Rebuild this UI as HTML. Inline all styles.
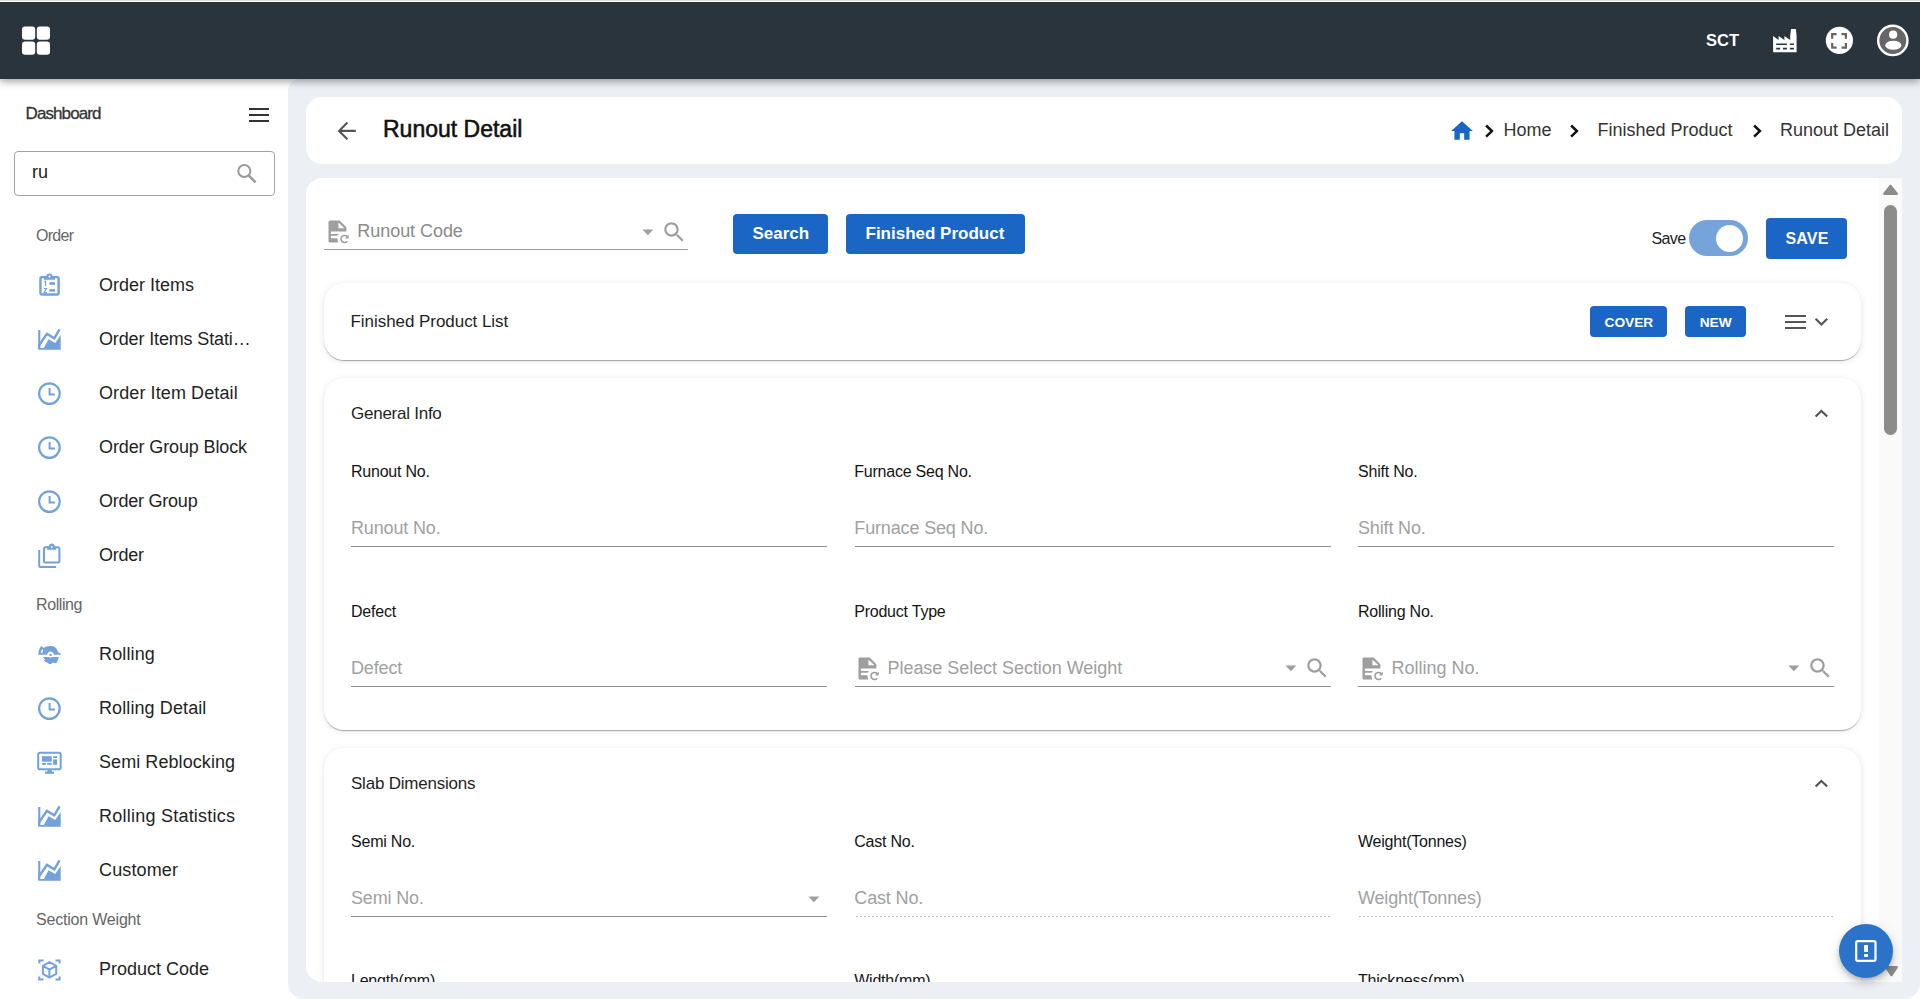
<!DOCTYPE html>
<html><head><meta charset="utf-8">
<style>
*{box-sizing:border-box;margin:0;padding:0}
html,body{width:1920px;height:999px;overflow:hidden;background:#fff;font-family:"Liberation Sans",sans-serif;color:#1c1c1c}
.a{position:absolute;white-space:nowrap}
.ico{position:absolute;overflow:visible}
.card{position:absolute;background:#fff}
#hdr{position:absolute;left:0;top:2px;width:1920px;height:77px;background:#29343c;z-index:5;box-shadow:0 2px 8px rgba(0,0,0,.42)}
#main{position:absolute;left:288px;top:79px;width:1632px;height:920px;background:#ecf0f5;border-radius:12px 0 16px 16px}
</style></head><body>
<div class="a" style="left:0;top:0;width:1920px;height:1px;background:#dedfdd;z-index:7"></div><div class="a" style="left:0;top:1px;width:1920px;height:1px;background:#fff;z-index:7"></div><div id="hdr"><svg class="ico" style="left:21px;top:22.5px" width="30" height="30" viewBox="0 0 30 30"><g fill="#fff"><rect x="1" y="1.5" width="13.2" height="13.2" rx="3"/><rect x="15.8" y="1.5" width="13.2" height="13.2" rx="3"/><rect x="1" y="16.5" width="13.2" height="13.2" rx="3"/><rect x="15.8" y="16.5" width="13.2" height="13.2" rx="3"/></g></svg></div><div class="a" style="left:1706px;top:32.03px;font-size:16.5px;line-height:16.5px;color:#fff;font-weight:bold;z-index:6;">SCT</div>
<svg class="ico" style="left:1770px;top:26px;z-index:6" width="30" height="30" viewBox="0 0 30 30"><path fill="#fff" fill-rule="evenodd" d="M3.1 26.2 V9.9 L8.6 14 V9.9 L14.4 14 V9.9 L20.2 14 V9.2 L21.1 2.9 H25.9 L26.6 9.9 V26.2 Z M6.2 17.4 h10.7 v1.6 h-10.7z M19.9 17.4 h4 v1.6 h-4z M6.2 21.8 h3.9 v1.7 h-3.9z M13 21.8 h3.9 v1.7 h-3.9z M19.9 21.8 h4 v1.7 h-4z"/></svg><svg class="ico" style="left:1824px;top:25px;z-index:6" width="32" height="32" viewBox="0 0 32 32"><circle cx="15.4" cy="15.45" r="13.6" fill="#fff"/><path d="M8.2 13.8 V9.2 H12.6 M17.5 9.2 H21.9 V13.8 M21.9 18 V22.6 H17.5 M12.6 22.6 H8.2 V18" fill="none" stroke="#666" stroke-width="2.2"/></svg><svg class="ico" style="left:1876px;top:24px;z-index:6" width="34" height="34" viewBox="0 0 34 34"><circle cx="16.8" cy="16.45" r="14.65" fill="#666" stroke="#fff" stroke-width="2.4"/><circle cx="17.1" cy="10.7" r="4.1" fill="#fff"/><ellipse cx="17.3" cy="21.25" rx="8.05" ry="4.45" fill="#fff"/></svg><div class="a" style="left:25.5px;top:104.61px;font-size:17px;line-height:17px;color:#333;-webkit-text-stroke:0.3px #333;letter-spacing:-0.9px;">Dashboard</div>
<div class="a" style="left:248.5px;top:108px;width:20.5px;height:2.2px;background:#333"></div><div class="a" style="left:248.5px;top:114px;width:20.5px;height:2.2px;background:#333"></div><div class="a" style="left:248.5px;top:119.7px;width:20.5px;height:2.2px;background:#333"></div><div class="a" style="left:14px;top:151px;width:261px;height:45px;border:1px solid #a3a3a3;border-radius:4px"></div><div class="a" style="left:32px;top:163.26px;font-size:18px;line-height:18px;color:#222;">ru</div>
<svg class="ico" style="left:232px;top:160px" width="28" height="28" viewBox="0 0 28 28"><circle cx="12.3" cy="11" r="6" fill="none" stroke="#999" stroke-width="2"/><path d="M16.6 15.4 L23.6 22.4" stroke="#999" stroke-width="2.4"/></svg><div class="a" style="left:36px;top:227.86px;font-size:16px;line-height:16px;color:#666;letter-spacing:-0.7px;">Order</div>
<svg class="ico" style="left:34px;top:269.0px" width="32" height="30" viewBox="0 0 32 30"><rect x="6.45" y="8.1" width="18.15" height="17.4" rx="1.2" fill="none" stroke="#72a2d9" stroke-width="2.4"/><path fill="#72a2d9" d="M9.9 6.9 H12.2 A3.3 3.3 0 0 1 18.6 6.9 H21 V10.7 H9.9 Z"/><circle cx="15.4" cy="7.6" r="1.1" fill="#fff"/><rect x="15.5" y="13.2" width="5.5" height="2.6" fill="#72a2d9"/><rect x="15.5" y="20.1" width="5.5" height="2.6" fill="#72a2d9"/><path d="M10.3 13 L11.6 12.2 V17" fill="none" stroke="#72a2d9" stroke-width="1.1"/><path d="M10 19.6 H12.6 L10 23.6 H12.8" fill="none" stroke="#72a2d9" stroke-width="1.1"/></svg><div class="a" style="left:99px;top:276.16px;font-size:18px;line-height:18px;color:#1f1f1f;letter-spacing:0.0px;">Order Items</div>
<svg class="ico" style="left:34px;top:324.1px" width="32" height="30" viewBox="0 0 32 30"><defs><clipPath id="chc1"><rect x="4.2" y="0" width="24" height="24.5"/></clipPath></defs><path fill="#72a2d9" d="M4.2 5.9 h2.1 v18.1 h20.4 v1.8 H4.2 z M9.8 24 L14.6 15.2 L21.3 18.9 L26.7 11.1 V24 Z"/><polyline clip-path="url(#chc1)" points="2.6,25 12.9,9.9 20.4,14.4 25.5,5.4" fill="none" stroke="#72a2d9" stroke-width="2.4"/></svg><div class="a" style="left:99px;top:330.16px;font-size:18px;line-height:18px;color:#1f1f1f;letter-spacing:-0.1411764705882353px;">Order Items Stati…</div>
<svg class="ico" style="left:34px;top:378.0px" width="32" height="30" viewBox="0 0 32 30"><circle cx="15.4" cy="15.6" r="10.3" fill="none" stroke="#72a2d9" stroke-width="2.2"/><path d="M15.6 10 V16.6 H21" fill="none" stroke="#72a2d9" stroke-width="2"/></svg><div class="a" style="left:99px;top:384.16px;font-size:18px;line-height:18px;color:#1f1f1f;letter-spacing:0.1px;">Order Item Detail</div>
<svg class="ico" style="left:34px;top:432.0px" width="32" height="30" viewBox="0 0 32 30"><circle cx="15.4" cy="15.6" r="10.3" fill="none" stroke="#72a2d9" stroke-width="2.2"/><path d="M15.6 10 V16.6 H21" fill="none" stroke="#72a2d9" stroke-width="2"/></svg><div class="a" style="left:99px;top:438.16px;font-size:18px;line-height:18px;color:#1f1f1f;letter-spacing:-0.125px;">Order Group Block</div>
<svg class="ico" style="left:34px;top:485.8px" width="32" height="30" viewBox="0 0 32 30"><circle cx="15.4" cy="15.6" r="10.3" fill="none" stroke="#72a2d9" stroke-width="2.2"/><path d="M15.6 10 V16.6 H21" fill="none" stroke="#72a2d9" stroke-width="2"/></svg><div class="a" style="left:99px;top:491.96px;font-size:18px;line-height:18px;color:#1f1f1f;letter-spacing:-0.24px;">Order Group</div>
<svg class="ico" style="left:34px;top:539.3px" width="32" height="30" viewBox="0 0 32 30"><rect x="10" y="8.2" width="15.4" height="15.4" rx="1.5" fill="none" stroke="#72a2d9" stroke-width="2"/><path fill="#72a2d9" d="M13.1 7.3 H14.9 A2.9 2.9 0 0 1 20.7 7.3 H22.1 V10.7 H13.1 Z"/><circle cx="17.8" cy="8" r="1.05" fill="#fff"/><path d="M5.2 11 V27 A1 1 0 0 0 6.2 28 H22" fill="none" stroke="#72a2d9" stroke-width="2"/></svg><div class="a" style="left:99px;top:545.96px;font-size:18px;line-height:18px;color:#1f1f1f;letter-spacing:-0.25px;">Order</div>
<div class="a" style="left:36px;top:597.36px;font-size:16px;line-height:16px;color:#666;letter-spacing:-0.4px;">Rolling</div>
<svg class="ico" style="left:34px;top:638.0px" width="32" height="30" viewBox="0 0 32 30"><path fill="#72a2d9" fill-rule="evenodd" d="M4.2 16.8 C4.5 13 5.5 10 7.2 8 L9.8 10 C11 8.8 13.5 8 16.5 8 C20.5 8 23.3 10.5 24 14.2 L26.7 15.6 V16.8 H20 C19.5 14.5 18 13.4 16.5 13.4 C15 13.4 13.5 14.5 13 16.8 Z M6.6 14.8 L8 11 L9.2 12 L8.5 14.8 Z"/><circle cx="16.5" cy="16.9" r="1.2" fill="#72a2d9"/><path fill="#72a2d9" d="M9 19 H14.8 C15.5 19.8 17.3 19.8 18 19 H24.8 L23 24.5 L21 25.2 L19 24.6 L17 25.9 H15.2 L13.2 24.6 L11.5 24 L10 22.5 L11 21.8 Z"/></svg><div class="a" style="left:99px;top:645.16px;font-size:18px;line-height:18px;color:#1f1f1f;letter-spacing:0.13333333333333333px;">Rolling</div>
<svg class="ico" style="left:34px;top:692.9px" width="32" height="30" viewBox="0 0 32 30"><circle cx="15.4" cy="15.6" r="10.3" fill="none" stroke="#72a2d9" stroke-width="2.2"/><path d="M15.6 10 V16.6 H21" fill="none" stroke="#72a2d9" stroke-width="2"/></svg><div class="a" style="left:99px;top:699.06px;font-size:18px;line-height:18px;color:#1f1f1f;letter-spacing:0.1px;">Rolling Detail</div>
<svg class="ico" style="left:34px;top:746.0999999999999px" width="32" height="30" viewBox="0 0 32 30"><rect x="4.2" y="6.7" width="22.5" height="16.5" rx="1.8" fill="none" stroke="#72a2d9" stroke-width="2"/><rect x="7.9" y="10.2" width="9.9" height="5.5" fill="#72a2d9"/><rect x="19.1" y="10.2" width="4" height="1.8" fill="#72a2d9"/><rect x="19.1" y="13.4" width="4" height="5.4" fill="#72a2d9"/><rect x="7.9" y="17" width="4" height="1.8" fill="#72a2d9"/><rect x="13.1" y="17" width="4.7" height="1.8" fill="#72a2d9"/><rect x="13.5" y="23" width="4.2" height="3" fill="#72a2d9"/><rect x="11" y="25.6" width="8.9" height="2.2" fill="#72a2d9"/></svg><div class="a" style="left:99px;top:752.96px;font-size:18px;line-height:18px;color:#1f1f1f;letter-spacing:0.07142857142857142px;">Semi Reblocking</div>
<svg class="ico" style="left:34px;top:801.1px" width="32" height="30" viewBox="0 0 32 30"><defs><clipPath id="chc2"><rect x="4.2" y="0" width="24" height="24.5"/></clipPath></defs><path fill="#72a2d9" d="M4.2 5.9 h2.1 v18.1 h20.4 v1.8 H4.2 z M9.8 24 L14.6 15.2 L21.3 18.9 L26.7 11.1 V24 Z"/><polyline clip-path="url(#chc2)" points="2.6,25 12.9,9.9 20.4,14.4 25.5,5.4" fill="none" stroke="#72a2d9" stroke-width="2.4"/></svg><div class="a" style="left:99px;top:807.16px;font-size:18px;line-height:18px;color:#1f1f1f;letter-spacing:0.23529411764705882px;">Rolling Statistics</div>
<svg class="ico" style="left:34px;top:855.0px" width="32" height="30" viewBox="0 0 32 30"><defs><clipPath id="chc3"><rect x="4.2" y="0" width="24" height="24.5"/></clipPath></defs><path fill="#72a2d9" d="M4.2 5.9 h2.1 v18.1 h20.4 v1.8 H4.2 z M9.8 24 L14.6 15.2 L21.3 18.9 L26.7 11.1 V24 Z"/><polyline clip-path="url(#chc3)" points="2.6,25 12.9,9.9 20.4,14.4 25.5,5.4" fill="none" stroke="#72a2d9" stroke-width="2.4"/></svg><div class="a" style="left:99px;top:861.06px;font-size:18px;line-height:18px;color:#1f1f1f;letter-spacing:0.14285714285714285px;">Customer</div>
<div class="a" style="left:36px;top:911.86px;font-size:16px;line-height:16px;color:#666;letter-spacing:-0.2px;">Section Weight</div>
<svg class="ico" style="left:34px;top:953.0px" width="32" height="30" viewBox="0 0 32 30"><path d="M5.3 10.5 V7.6 H9.6 M21.5 7.6 H25.6 V10.5 M25.6 23.5 V26.6 H21.5 M9.6 26.6 H5.3 V23.5" fill="none" stroke="#72a2d9" stroke-width="2"/><path d="M15.4 9 L22.2 12.8 V20.8 L15.4 24.6 L8.9 20.8 V12.8 Z M8.9 12.8 L15.4 16.6 L22.2 12.8 M15.4 16.6 V24.6" fill="none" stroke="#72a2d9" stroke-width="2" stroke-linejoin="round"/></svg><div class="a" style="left:99px;top:960.26px;font-size:18px;line-height:18px;color:#1f1f1f;letter-spacing:0px;">Product Code</div>

<div id="main"></div><div class="card" style="left:306px;top:97px;width:1596px;height:67px;border-radius:16px"></div><svg class="ico" style="left:334px;top:118px" width="26" height="26" viewBox="0 0 26 26"><path d="M21.8 12.9 H6.5 M13.4 4.6 L5.1 12.9 L13.4 21.2" fill="none" stroke="#555" stroke-width="2.1"/></svg><div class="a" style="left:383px;top:117.53px;font-size:23px;line-height:23px;color:#111;-webkit-text-stroke:0.55px #111;">Runout Detail</div>
<svg class="ico" style="left:1449px;top:117.5px" width="26" height="26" viewBox="0 0 24 24"><path fill="#1a66c6" d="M10 20v-6h4v6h5v-8h3L12 3 2 12h3v8z"/></svg><svg class="ico" style="left:1483.5px;top:122.5px" width="12" height="16" viewBox="0 0 12 16"><path d="M2.1 2.5 L7.9 8.1 L2.1 13.7" fill="none" stroke="#111" stroke-width="2.5"/></svg><div class="a" style="left:1503.5px;top:120.56px;font-size:18px;line-height:18px;color:#333;">Home</div>
<svg class="ico" style="left:1568.5px;top:122.5px" width="12" height="16" viewBox="0 0 12 16"><path d="M2.1 2.5 L7.9 8.1 L2.1 13.7" fill="none" stroke="#111" stroke-width="2.5"/></svg><div class="a" style="left:1597.5px;top:120.56px;font-size:18px;line-height:18px;color:#333;">Finished Product</div>
<svg class="ico" style="left:1751.5px;top:122.5px" width="12" height="16" viewBox="0 0 12 16"><path d="M2.1 2.5 L7.9 8.1 L2.1 13.7" fill="none" stroke="#111" stroke-width="2.5"/></svg><div class="a" style="left:1780px;top:120.56px;font-size:18px;line-height:18px;color:#333;">Runout Detail</div>

<div class="card" style="left:306px;top:178px;width:1596px;height:804px;border-radius:16px 0 0 16px;overflow:hidden"><svg class="ico" style="left:18px;top:38px" width="30" height="30" viewBox="0 0 30 30"><path fill="#9e9e9e" fill-rule="evenodd" d="M4.5 6 Q4.5 4.5 6 4.5 H15.6 L22.4 11.3 V15.6 H6.9 V18 H15 L13.3 19.8 H6.9 V22.2 H13.4 L14 26.4 H6 Q4.5 26.4 4.5 24.9 Z M14.4 6.4 V12.3 H20.4 Z"/><path d="M23.6 21.3 A3.5 3.5 0 1 0 23.2 25.2" fill="none" stroke="#9e9e9e" stroke-width="1.6"/><path fill="#9e9e9e" d="M24.7 18.8 V22.6 H20.9 Z"/></svg>
<div class="a" style="left:51.30000000000001px;top:43.56px;font-size:18px;line-height:18px;color:#8a8a8a;letter-spacing:-0.05px;">Runout Code</div>
<svg class="ico" style="left:335.5px;top:50.80000000000001px" width="12" height="7" viewBox="0 0 12 7"><path fill="#9e9e9e" d="M0.5 0.5 H11.3 L5.9 6.3 Z"/></svg>
<svg class="ico" style="left:355px;top:41px" width="26.5" height="26.5" viewBox="0 0 24 24"><path fill="#9e9e9e" d="M15.5 14h-.79l-.28-.27C15.41 12.59 16 11.11 16 9.5 16 5.91 13.09 3 9.5 3S3 5.91 3 9.5 5.91 16 9.5 16c1.61 0 3.09-.59 4.23-1.57l.27.28v.79l5 4.99L20.49 19l-4.99-5zm-6 0C7.01 14 5 11.99 5 9.5S7.01 5 9.5 5 14 7.01 14 9.5 11.99 14 9.5 14z"/></svg>
<div class="a" style="left:18px;top:71px;width:364px;height:1.2px;background:#9a9a9a"></div>
<div class="a" style="left:427px;top:36px;width:95px;height:40px;background:#1b66c5;border-radius:4px"></div>
<div class="a" style="left:446.5px;top:47.31px;font-size:17px;line-height:17px;color:#fff;font-weight:bold;">Search</div>
<div class="a" style="left:540px;top:36px;width:179px;height:40px;background:#1b66c5;border-radius:4px"></div>
<div class="a" style="left:559.5px;top:47.31px;font-size:17px;line-height:17px;color:#fff;font-weight:bold;">Finished Product</div>
<div class="a" style="left:1345.5px;top:53.46px;font-size:16px;line-height:16px;color:#222;letter-spacing:-0.6px;">Save</div>
<div class="a" style="left:1383px;top:42px;width:58.5px;height:36px;background:#76a4da;border-radius:18px"></div>
<div class="a" style="left:1410px;top:47px;width:27.3px;height:27.3px;background:#fff;border-radius:50%"></div>
<div class="a" style="left:1460px;top:40px;width:81px;height:41px;background:#1b66c5;border-radius:4px"></div>
<div class="a" style="left:1479.5px;top:53.46px;font-size:16px;line-height:16px;color:#fff;font-weight:bold;letter-spacing:0.15px;">SAVE</div>
<div class="a" style="left:1573px;top:0px;width:23px;height:804px;background:#fafafa"></div>
<svg class="ico" style="left:1576px;top:5px" width="17" height="13" viewBox="0 0 17 13"><path fill="#8c8c8c" d="M8.5 3 L14.6 10.8 H2.4 Z" stroke="#8c8c8c" stroke-width="2.6" stroke-linejoin="round"/></svg>
<div class="a" style="left:1578.2px;top:27px;width:13.2px;height:230px;background:#8c8c8c;border-radius:7px"></div>
<svg class="ico" style="left:1578px;top:787px" width="15" height="12" viewBox="0 0 15 12"><path fill="#8c8c8c" d="M2.3 2.3 H12.6 L7.45 10 Z" stroke="#8c8c8c" stroke-width="2.5" stroke-linejoin="round"/></svg>
<div class="a" style="left:18px;top:105px;width:1537px;height:77px;background:#fff;border-radius:20px;box-shadow:0 2px 1px -1px rgba(0,0,0,.2),0 1px 1px 0 rgba(0,0,0,.14),0 1px 7px 0 rgba(0,0,0,.10);"></div>
<div class="a" style="left:44.5px;top:134.61px;font-size:17px;line-height:17px;color:#1f1f1f;letter-spacing:-0.05px;">Finished Product List</div>
<div class="a" style="left:1284px;top:128px;width:77px;height:30.5px;background:#1b66c5;border-radius:4px"></div>
<div class="a" style="left:1298.5px;top:138.10px;font-size:13.7px;line-height:13.7px;color:#fff;font-weight:bold;">COVER</div>
<div class="a" style="left:1379px;top:128px;width:61px;height:30.5px;background:#1b66c5;border-radius:4px"></div>
<div class="a" style="left:1393.7px;top:138.10px;font-size:13.7px;line-height:13.7px;color:#fff;font-weight:bold;">NEW</div>
<div class="a" style="left:1479px;top:137.10000000000002px;width:21px;height:2.2px;background:#555"></div>
<div class="a" style="left:1479px;top:142.89999999999998px;width:21px;height:2.2px;background:#555"></div>
<div class="a" style="left:1479px;top:148.5px;width:21px;height:2.2px;background:#555"></div>
<svg class="ico" style="left:1507px;top:137px" width="17" height="13" viewBox="0 0 17 13"><path d="M2.6 3.8 L8.4 9.5 L14.2 3.8" fill="none" stroke="#555" stroke-width="2.1"/></svg>
<div class="a" style="left:18px;top:200px;width:1537px;height:352px;background:#fff;border-radius:20px;box-shadow:0 2px 1px -1px rgba(0,0,0,.2),0 1px 1px 0 rgba(0,0,0,.14),0 1px 7px 0 rgba(0,0,0,.10);"></div>
<div class="a" style="left:45px;top:226.81px;font-size:17px;line-height:17px;color:#1f1f1f;letter-spacing:-0.25px;">General Info</div>
<svg class="ico" style="left:1507px;top:228px" width="17" height="13" viewBox="0 0 17 13"><path d="M2.6 10.6 L8.4 4.9 L14.2 10.6" fill="none" stroke="#555" stroke-width="2.1"/></svg>
<div class="a" style="left:45px;top:286.06px;font-size:16px;line-height:16px;color:#141414;letter-spacing:-0.22px;">Runout No.</div>
<div class="a" style="left:45px;top:341.06px;font-size:18px;line-height:18px;color:#a1a1a1;letter-spacing:-0.15px;">Runout No.</div>
<div class="a" style="left:45px;top:368px;width:476px;height:1px;background:#8f8f8f"></div>
<div class="a" style="left:548.2px;top:286.06px;font-size:16px;line-height:16px;color:#141414;letter-spacing:-0.22px;">Furnace Seq No.</div>
<div class="a" style="left:548.3px;top:341.06px;font-size:18px;line-height:18px;color:#a1a1a1;letter-spacing:-0.15px;">Furnace Seq No.</div>
<div class="a" style="left:549px;top:368px;width:476px;height:1px;background:#8f8f8f"></div>
<div class="a" style="left:1052px;top:286.06px;font-size:16px;line-height:16px;color:#141414;letter-spacing:-0.22px;">Shift No.</div>
<div class="a" style="left:1052px;top:341.06px;font-size:18px;line-height:18px;color:#a1a1a1;letter-spacing:-0.15px;">Shift No.</div>
<div class="a" style="left:1052px;top:368px;width:476px;height:1px;background:#8f8f8f"></div>
<div class="a" style="left:45px;top:426.16px;font-size:16px;line-height:16px;color:#141414;letter-spacing:-0.22px;">Defect</div>
<div class="a" style="left:45px;top:481.06px;font-size:18px;line-height:18px;color:#a1a1a1;letter-spacing:-0.15px;">Defect</div>
<div class="a" style="left:45px;top:508px;width:476px;height:1px;background:#8f8f8f"></div>
<div class="a" style="left:548.2px;top:426.16px;font-size:16px;line-height:16px;color:#141414;letter-spacing:-0.22px;">Product Type</div>
<svg class="ico" style="left:547.7px;top:475.20000000000005px" width="30" height="30" viewBox="0 0 30 30"><path fill="#9e9e9e" fill-rule="evenodd" d="M4.5 6 Q4.5 4.5 6 4.5 H15.6 L22.4 11.3 V15.6 H6.9 V18 H15 L13.3 19.8 H6.9 V22.2 H13.4 L14 26.4 H6 Q4.5 26.4 4.5 24.9 Z M14.4 6.4 V12.3 H20.4 Z"/><path d="M23.6 21.3 A3.5 3.5 0 1 0 23.2 25.2" fill="none" stroke="#9e9e9e" stroke-width="1.6"/><path fill="#9e9e9e" d="M24.7 18.8 V22.6 H20.9 Z"/></svg>
<div class="a" style="left:581.5px;top:480.76px;font-size:18px;line-height:18px;color:#a0a0a0;letter-spacing:-0.04px;">Please Select Section Weight</div>
<svg class="ico" style="left:978.5px;top:487px" width="12" height="7" viewBox="0 0 12 7"><path fill="#9e9e9e" d="M0.5 0.5 H11.3 L5.9 6.3 Z"/></svg>
<svg class="ico" style="left:998px;top:477.29999999999995px" width="26.5" height="26.5" viewBox="0 0 24 24"><path fill="#9e9e9e" d="M15.5 14h-.79l-.28-.27C15.41 12.59 16 11.11 16 9.5 16 5.91 13.09 3 9.5 3S3 5.91 3 9.5 5.91 16 9.5 16c1.61 0 3.09-.59 4.23-1.57l.27.28v.79l5 4.99L20.49 19l-4.99-5zm-6 0C7.01 14 5 11.99 5 9.5S7.01 5 9.5 5 14 7.01 14 9.5 11.99 14 9.5 14z"/></svg>
<div class="a" style="left:548.5px;top:508px;width:476.5px;height:1px;background:#8f8f8f"></div>
<div class="a" style="left:1052px;top:426.16px;font-size:16px;line-height:16px;color:#141414;letter-spacing:-0.22px;">Rolling No.</div>
<svg class="ico" style="left:1051.5px;top:475.29999999999995px" width="30" height="30" viewBox="0 0 30 30"><path fill="#9e9e9e" fill-rule="evenodd" d="M4.5 6 Q4.5 4.5 6 4.5 H15.6 L22.4 11.3 V15.6 H6.9 V18 H15 L13.3 19.8 H6.9 V22.2 H13.4 L14 26.4 H6 Q4.5 26.4 4.5 24.9 Z M14.4 6.4 V12.3 H20.4 Z"/><path d="M23.6 21.3 A3.5 3.5 0 1 0 23.2 25.2" fill="none" stroke="#9e9e9e" stroke-width="1.6"/><path fill="#9e9e9e" d="M24.7 18.8 V22.6 H20.9 Z"/></svg>
<div class="a" style="left:1085.5px;top:480.76px;font-size:18px;line-height:18px;color:#a0a0a0;">Rolling No.</div>
<svg class="ico" style="left:1481.5px;top:487px" width="12" height="7" viewBox="0 0 12 7"><path fill="#9e9e9e" d="M0.5 0.5 H11.3 L5.9 6.3 Z"/></svg>
<svg class="ico" style="left:1501px;top:477.29999999999995px" width="26.5" height="26.5" viewBox="0 0 24 24"><path fill="#9e9e9e" d="M15.5 14h-.79l-.28-.27C15.41 12.59 16 11.11 16 9.5 16 5.91 13.09 3 9.5 3S3 5.91 3 9.5 5.91 16 9.5 16c1.61 0 3.09-.59 4.23-1.57l.27.28v.79l5 4.99L20.49 19l-4.99-5zm-6 0C7.01 14 5 11.99 5 9.5S7.01 5 9.5 5 14 7.01 14 9.5 11.99 14 9.5 14z"/></svg>
<div class="a" style="left:1052px;top:508px;width:476px;height:1px;background:#8f8f8f"></div>
<div class="a" style="left:18px;top:570px;width:1537px;height:400px;background:#fff;border-radius:20px;box-shadow:0 2px 1px -1px rgba(0,0,0,.2),0 1px 1px 0 rgba(0,0,0,.14),0 1px 7px 0 rgba(0,0,0,.10);"></div>
<div class="a" style="left:45px;top:597.41px;font-size:17px;line-height:17px;color:#1f1f1f;letter-spacing:-0.22px;">Slab Dimensions</div>
<svg class="ico" style="left:1507px;top:598px" width="17" height="13" viewBox="0 0 17 13"><path d="M2.6 10.6 L8.4 4.9 L14.2 10.6" fill="none" stroke="#555" stroke-width="2.1"/></svg>
<div class="a" style="left:45px;top:655.96px;font-size:16px;line-height:16px;color:#141414;letter-spacing:-0.22px;">Semi No.</div>
<div class="a" style="left:45px;top:710.86px;font-size:18px;line-height:18px;color:#a1a1a1;letter-spacing:-0.15px;">Semi No.</div>
<div class="a" style="left:45px;top:738px;width:476px;height:1px;background:#8f8f8f"></div>
<div class="a" style="left:548.2px;top:655.96px;font-size:16px;line-height:16px;color:#141414;letter-spacing:-0.22px;">Cast No.</div>
<div class="a" style="left:548.3px;top:710.86px;font-size:18px;line-height:18px;color:#a1a1a1;letter-spacing:-0.15px;">Cast No.</div>
<div class="a" style="left:549.5px;top:738px;width:476px;height:1px;background-image:linear-gradient(to right,#bdbdbd 50%,transparent 50%);background-size:4px 1px"></div>
<div class="a" style="left:1052px;top:655.96px;font-size:16px;line-height:16px;color:#141414;letter-spacing:-0.22px;">Weight(Tonnes)</div>
<div class="a" style="left:1052px;top:710.86px;font-size:18px;line-height:18px;color:#a1a1a1;letter-spacing:-0.15px;">Weight(Tonnes)</div>
<div class="a" style="left:1052.5px;top:738px;width:476px;height:1px;background-image:linear-gradient(to right,#bdbdbd 50%,transparent 50%);background-size:4px 1px"></div>
<svg class="ico" style="left:502px;top:717.5px" width="12" height="7" viewBox="0 0 12 7"><path fill="#9e9e9e" d="M0.5 0.5 H11.3 L5.9 6.3 Z"/></svg>
<div class="a" style="left:45px;top:795.06px;font-size:16px;line-height:16px;color:#141414;letter-spacing:-0.22px;">Length(mm)</div>
<div class="a" style="left:548.2px;top:795.06px;font-size:16px;line-height:16px;color:#141414;letter-spacing:-0.22px;">Width(mm)</div>
<div class="a" style="left:1052px;top:795.06px;font-size:16px;line-height:16px;color:#141414;letter-spacing:-0.22px;">Thickness(mm)</div>
</div><div class="a" style="left:1839px;top:924px;width:54px;height:54px;border-radius:50%;background:#2b73c8;box-shadow:0 3px 5px -1px rgba(0,0,0,.2),0 6px 10px 0 rgba(0,0,0,.12),0 1px 14px 0 rgba(0,0,0,.08)"></div><svg class="ico" style="left:1852px;top:937px" width="28" height="28" viewBox="0 0 28 28"><rect x="4.2" y="4.1" width="19.3" height="19.8" rx="1.6" fill="none" stroke="#fff" stroke-width="2.2"/><rect x="12.1" y="8" width="3.9" height="7" fill="#fff"/><rect x="12.1" y="17" width="3.9" height="3" fill="#fff"/></svg>
</body></html>
